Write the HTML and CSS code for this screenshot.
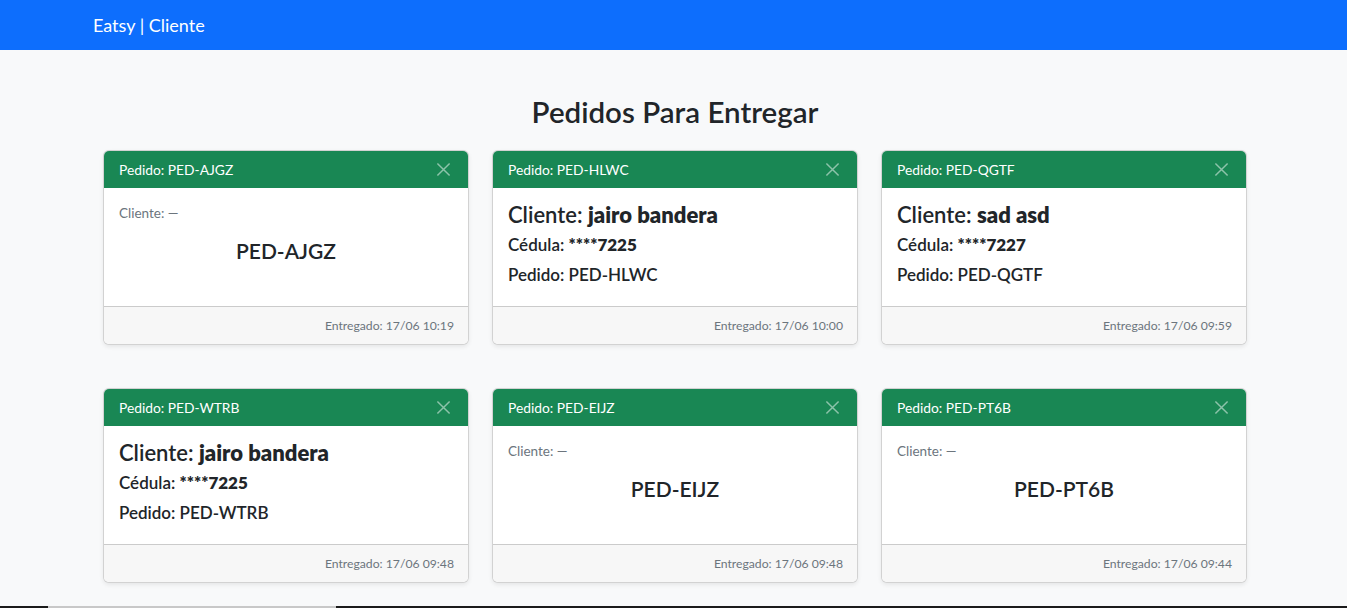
FILE: index.html
```html
<!DOCTYPE html>
<html lang="es">
<head>
<meta charset="utf-8">
<title>Eatsy | Cliente</title>
<link rel="stylesheet" href="styles.css">
</head>
<body>
<nav class="navbar">
  <span class="brand">Eatsy | Cliente</span>
</nav>
<main class="page">
  <h2 class="title">Pedidos Para Entregar</h2>
  <div class="grid">
    <div class="card">
      <div class="card-header"><span>Pedido: PED-AJGZ</span><span class="close"><svg viewBox="0 0 16 16" width="15" height="15"><path d="M1.5 1.5l13 13M14.5 1.5l-13 13"/></svg></span></div>
      <div class="card-body empty">
        <div class="muted">Cliente: —</div>
        <div class="code">PED-AJGZ</div>
      </div>
      <div class="card-footer">Entregado: 17/06 10:19</div>
    </div>
    <div class="card">
      <div class="card-header"><span>Pedido: PED-HLWC</span><span class="close"><svg viewBox="0 0 16 16" width="15" height="15"><path d="M1.5 1.5l13 13M14.5 1.5l-13 13"/></svg></span></div>
      <div class="card-body">
        <div class="client">Cliente: <b>jairo bandera</b></div>
        <div class="line">Cédula: <b>****7225</b></div>
        <div class="line">Pedido: PED-HLWC</div>
      </div>
      <div class="card-footer">Entregado: 17/06 10:00</div>
    </div>
    <div class="card">
      <div class="card-header"><span>Pedido: PED-QGTF</span><span class="close"><svg viewBox="0 0 16 16" width="15" height="15"><path d="M1.5 1.5l13 13M14.5 1.5l-13 13"/></svg></span></div>
      <div class="card-body">
        <div class="client">Cliente: <b>sad asd</b></div>
        <div class="line">Cédula: <b>****7227</b></div>
        <div class="line">Pedido: PED-QGTF</div>
      </div>
      <div class="card-footer">Entregado: 17/06 09:59</div>
    </div>
    <div class="card">
      <div class="card-header"><span>Pedido: PED-WTRB</span><span class="close"><svg viewBox="0 0 16 16" width="15" height="15"><path d="M1.5 1.5l13 13M14.5 1.5l-13 13"/></svg></span></div>
      <div class="card-body">
        <div class="client">Cliente: <b>jairo bandera</b></div>
        <div class="line">Cédula: <b>****7225</b></div>
        <div class="line">Pedido: PED-WTRB</div>
      </div>
      <div class="card-footer">Entregado: 17/06 09:48</div>
    </div>
    <div class="card">
      <div class="card-header"><span>Pedido: PED-EIJZ</span><span class="close"><svg viewBox="0 0 16 16" width="15" height="15"><path d="M1.5 1.5l13 13M14.5 1.5l-13 13"/></svg></span></div>
      <div class="card-body empty">
        <div class="muted">Cliente: —</div>
        <div class="code">PED-EIJZ</div>
      </div>
      <div class="card-footer">Entregado: 17/06 09:48</div>
    </div>
    <div class="card">
      <div class="card-header"><span>Pedido: PED-PT6B</span><span class="close"><svg viewBox="0 0 16 16" width="15" height="15"><path d="M1.5 1.5l13 13M14.5 1.5l-13 13"/></svg></span></div>
      <div class="card-body empty">
        <div class="muted">Cliente: —</div>
        <div class="code">PED-PT6B</div>
      </div>
      <div class="card-footer">Entregado: 17/06 09:44</div>
    </div>
  </div>
</main>
<div class="edge"><span class="edge-a"></span><span class="edge-b"></span><span class="edge-c"></span></div>
</body>
</html>
```

FILE: styles.css
```css
* { box-sizing: border-box; }
html, body { margin: 0; padding: 0; }
body {
  background: #f8f9fa;
  color: #212529;
  font-family: "Lato", "Noto Sans", sans-serif;
  height: 608px;
  overflow: hidden;
}
.navbar {
  height: 50px;
  background: #0d6efd;
  display: flex;
  align-items: center;
  padding-left: 93px;
}
.brand {
  color: #fff;
  font-size: 18px;
  line-height: 1;
}
.page {
  width: 1144px;
  margin-left: 103px;
  padding-top: 43px;
}
.title {
  margin: 0 0 19px;
  text-align: center;
  font-size: 29.5px;
  font-weight: 600;
  line-height: 38px;
}
.grid {
  display: grid;
  grid-template-columns: repeat(3, 366px);
  column-gap: 23px;
  row-gap: 43px;
}
.card {
  background: #fff;
  border: 1px solid rgba(0,0,0,.175);
  border-radius: 6px;
  box-shadow: 0 2px 4px rgba(0,0,0,.075);
  overflow: hidden;
  display: flex;
  flex-direction: column;
  height: 195px;
}
.card-header {
  background: #198754;
  color: #fff;
  height: 37px;
  flex: none;
  display: flex;
  align-items: center;
  justify-content: space-between;
  padding: 0 17px 0 15px;
  font-size: 13.8px;
}
.close {
  display: flex;
  opacity: .5;
}
.close svg { stroke: #fff; stroke-width: 1.6; fill: none; }
.card-body {
  flex: 1;
  padding: 12px 15px 0;
}
.client {
  font-size: 22px;
  font-weight: 600;
  line-height: 30px;
}
.client b, .line b { font-weight: 800; }
.line {
  font-size: 17px;
  font-weight: 600;
  line-height: 30px;
}
.card-body.empty { padding-top: 16px; }
.muted {
  font-size: 13.5px;
  color: #6c757d;
  line-height: 18px;
}
.code {
  text-align: center;
  font-size: 21px;
  font-weight: 600;
  margin-top: 15px;
  line-height: 28px;
}
.card-footer {
  height: 38px;
  flex: none;
  border-top: 1px solid rgba(0,0,0,.175);
  background: #f7f7f7;
  color: #6c757d;
  font-size: 12.2px;
  display: flex;
  align-items: center;
  justify-content: flex-end;
  padding: 0 14px;
}
.edge {
  position: fixed;
  left: 0;
  right: 0;
  bottom: 0;
  height: 2px;
  display: flex;
}
.edge-a { width: 48px; background: #1b1b1b; }
.edge-b { width: 288px; background: #c8c8c8; }
.edge-c { flex: 1; background: #1b1b1b; }
```
